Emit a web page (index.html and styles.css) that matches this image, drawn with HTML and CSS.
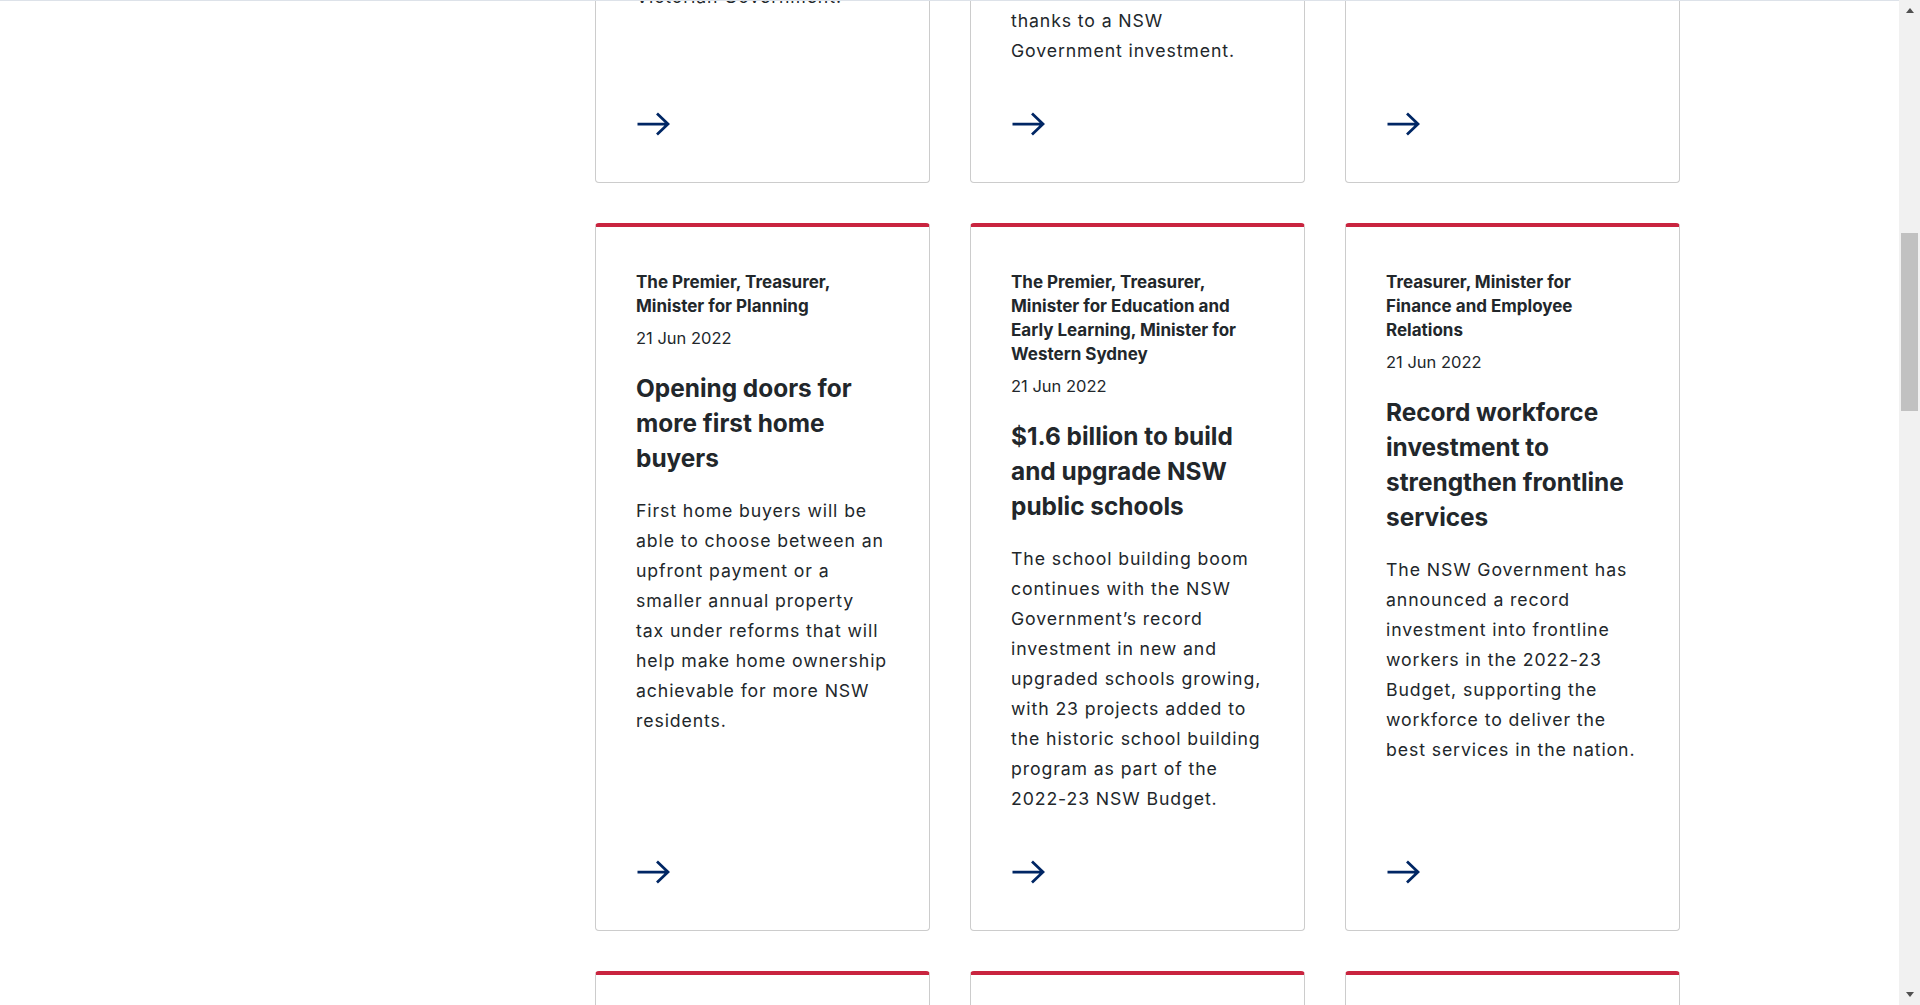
FILE: index.html
```html
<!DOCTYPE html>
<html lang="en">
<head>
<meta charset="utf-8">
<title>Media releases</title>
<link rel="stylesheet" href="styles.css">
</head>
<body>
<div class="page-edge"></div>
<div class="layout">
  <main class="results">
    <div class="card-grid">
      <article class="card">
        <p class="card__meta">Minister for Regional NSW</p>
        <p class="card__date">21 Jun 2022</p>
        <h3 class="card__title">Better services for border towns</h3>
        <p class="card__text">Border communities will have easier access to services under a new agreement with the Victorian Government.</p>
        <a class="card__link" href="#" aria-label="Read more"><svg viewBox="0 0 34 24" aria-hidden="true"><path d="M1.5 12H32M21 1.5L32 12L21 22.5"/></svg></a>
      </article>
      <article class="card">
        <p class="card__meta">Minister for Regional Transport and Roads</p>
        <p class="card__date">21 Jun 2022</p>
        <h3 class="card__title">Better trains for the bush</h3>
        <p class="card__text">Regional passengers will enjoy safer, more comfortable and accessible journeys, thanks to a NSW Government investment.</p>
        <a class="card__link" href="#" aria-label="Read more"><svg viewBox="0 0 34 24" aria-hidden="true"><path d="M1.5 12H32M21 1.5L32 12L21 22.5"/></svg></a>
      </article>
      <article class="card">
        <p class="card__meta">Minister for Environment</p>
        <p class="card__date">21 Jun 2022</p>
        <h3 class="card__title">Protecting native wildlife</h3>
        <p class="card__text">New funding will protect threatened species.</p>
        <a class="card__link" href="#" aria-label="Read more"><svg viewBox="0 0 34 24" aria-hidden="true"><path d="M1.5 12H32M21 1.5L32 12L21 22.5"/></svg></a>
      </article>

      <article class="card">
        <p class="card__meta">The Premier, Treasurer, Minister for Planning</p>
        <p class="card__date">21 Jun 2022</p>
        <h3 class="card__title">Opening doors for more first home buyers</h3>
        <p class="card__text">First home buyers will be able to choose between an upfront payment or a smaller annual property tax under reforms that will help make home ownership achievable for more NSW residents.</p>
        <a class="card__link" href="#" aria-label="Read more"><svg viewBox="0 0 34 24" aria-hidden="true"><path d="M1.5 12H32M21 1.5L32 12L21 22.5"/></svg></a>
      </article>
      <article class="card">
        <p class="card__meta">The Premier, Treasurer, Minister for Education and Early Learning, Minister for Western Sydney</p>
        <p class="card__date">21 Jun 2022</p>
        <h3 class="card__title">$1.6 billion to build and upgrade NSW public schools</h3>
        <p class="card__text">The school building boom continues with the NSW Government’s record investment in new and upgraded schools growing, with 23 projects added to the historic school building program as part of the 2022-23 NSW Budget.</p>
        <a class="card__link" href="#" aria-label="Read more"><svg viewBox="0 0 34 24" aria-hidden="true"><path d="M1.5 12H32M21 1.5L32 12L21 22.5"/></svg></a>
      </article>
      <article class="card">
        <p class="card__meta">Treasurer, Minister for Finance and Employee Relations</p>
        <p class="card__date">21 Jun 2022</p>
        <h3 class="card__title">Record workforce investment to strengthen frontline services</h3>
        <p class="card__text">The NSW Government has announced a record investment into frontline workers in the 2022-23 Budget, supporting the workforce to deliver the best services in the nation.</p>
        <a class="card__link" href="#" aria-label="Read more"><svg viewBox="0 0 34 24" aria-hidden="true"><path d="M1.5 12H32M21 1.5L32 12L21 22.5"/></svg></a>
      </article>

      <article class="card">
        <p class="card__meta">Treasurer</p>
        <p class="card__date">21 Jun 2022</p>
        <h3 class="card__title">Budget support for families</h3>
        <a class="card__link" href="#" aria-label="Read more"><svg viewBox="0 0 34 24" aria-hidden="true"><path d="M1.5 12H32M21 1.5L32 12L21 22.5"/></svg></a>
      </article>
      <article class="card">
        <p class="card__meta">Minister for Health</p>
        <p class="card__date">21 Jun 2022</p>
        <h3 class="card__title">More nurses for hospitals</h3>
        <a class="card__link" href="#" aria-label="Read more"><svg viewBox="0 0 34 24" aria-hidden="true"><path d="M1.5 12H32M21 1.5L32 12L21 22.5"/></svg></a>
      </article>
      <article class="card">
        <p class="card__meta">Minister for Transport</p>
        <p class="card__date">21 Jun 2022</p>
        <h3 class="card__title">Faster trips for commuters</h3>
        <a class="card__link" href="#" aria-label="Read more"><svg viewBox="0 0 34 24" aria-hidden="true"><path d="M1.5 12H32M21 1.5L32 12L21 22.5"/></svg></a>
      </article>
    </div>
  </main>
</div>
<div class="scrollbar" aria-hidden="true">
  <span class="scrollbar__btn"><span class="scrollbar__arrow scrollbar__arrow--up"></span></span>
  <span class="scrollbar__track"><span class="scrollbar__thumb"></span></span>
  <span class="scrollbar__btn"><span class="scrollbar__arrow scrollbar__arrow--down"></span></span>
</div>
<script src="app.js"></script>
</body>
</html>
```
FILE: styles.css
```css
html {
  font-family: Inter, "Noto Sans", sans-serif;
  scrollbar-width: none;
}

body {
  margin: 0;
  padding-right: 21px;
  color: #22272b;
  background: #fff;
}

.page-edge {
  position: fixed;
  top: 0;
  left: 0;
  right: 0;
  height: 1px;
  background: #dde2e9;
  z-index: 10;
}

.layout {
  max-width: 1461px;
  margin: 0 auto;
  display: grid;
  grid-template-columns: 1fr 1085px;
  padding: 40px 0 80px;
}

.results {
  grid-column: 2;
}

.card-grid {
  display: grid;
  grid-template-columns: repeat(3, 335px);
  gap: 40px;
}

.card {
  display: flex;
  flex-direction: column;
  border: 1px solid #cccccc;
  border-top: 4px solid #c9243f;
  border-radius: 4px;
  padding: 43px 40px 46px;
}

.card__meta {
  margin: 0;
  font-size: 17px;
  font-weight: 700;
  line-height: 24px;
}

.card__date {
  margin: 8px 0 0;
  font-size: 16.5px;
  line-height: 24px;
}

.card__title {
  margin: 21px 0 0;
  font-size: 24.4px;
  font-weight: 700;
  line-height: 35px;
}

.card__text {
  max-width: 251.55px;
  margin: 20px 0 0;
  font-size: 17.7px;
  letter-spacing: 0.05em;
  line-height: 30px;
}

.card__link {
  margin-top: auto;
  padding-top: 46px;
  align-self: flex-start;
  line-height: 0;
  color: #002664;
}

.card__link svg {
  display: block;
  width: 34px;
  height: 24px;
  fill: none;
  stroke: currentColor;
  stroke-width: 2.75;
}

.scrollbar {
  position: fixed;
  top: 0;
  right: 0;
  bottom: 0;
  width: 21px;
  display: flex;
  flex-direction: column;
  background: #f1f1f1;
  z-index: 20;
}

.scrollbar__btn {
  height: 21px;
  display: flex;
  align-items: center;
  justify-content: center;
}

.scrollbar__arrow {
  width: 0;
  height: 0;
  border-left: 4.5px solid transparent;
  border-right: 4.5px solid transparent;
}

.scrollbar__arrow--up {
  border-bottom: 5px solid #505050;
}

.scrollbar__arrow--down {
  border-top: 5px solid #505050;
}

.scrollbar__track {
  flex: 1;
  display: flex;
  flex-direction: column;
}

.scrollbar__thumb {
  height: 178px;
  margin: 212px 2px 0;
  background: #c1c1c1;
}
```
FILE: app.js
```js
function alignView() {
  var cards = document.querySelectorAll('.card');
  var anchor = cards[3];
  var y = anchor.getBoundingClientRect().top + window.scrollY - 223;
  window.scrollTo(0, y);
}
alignView();
window.addEventListener('load', alignView);
```
